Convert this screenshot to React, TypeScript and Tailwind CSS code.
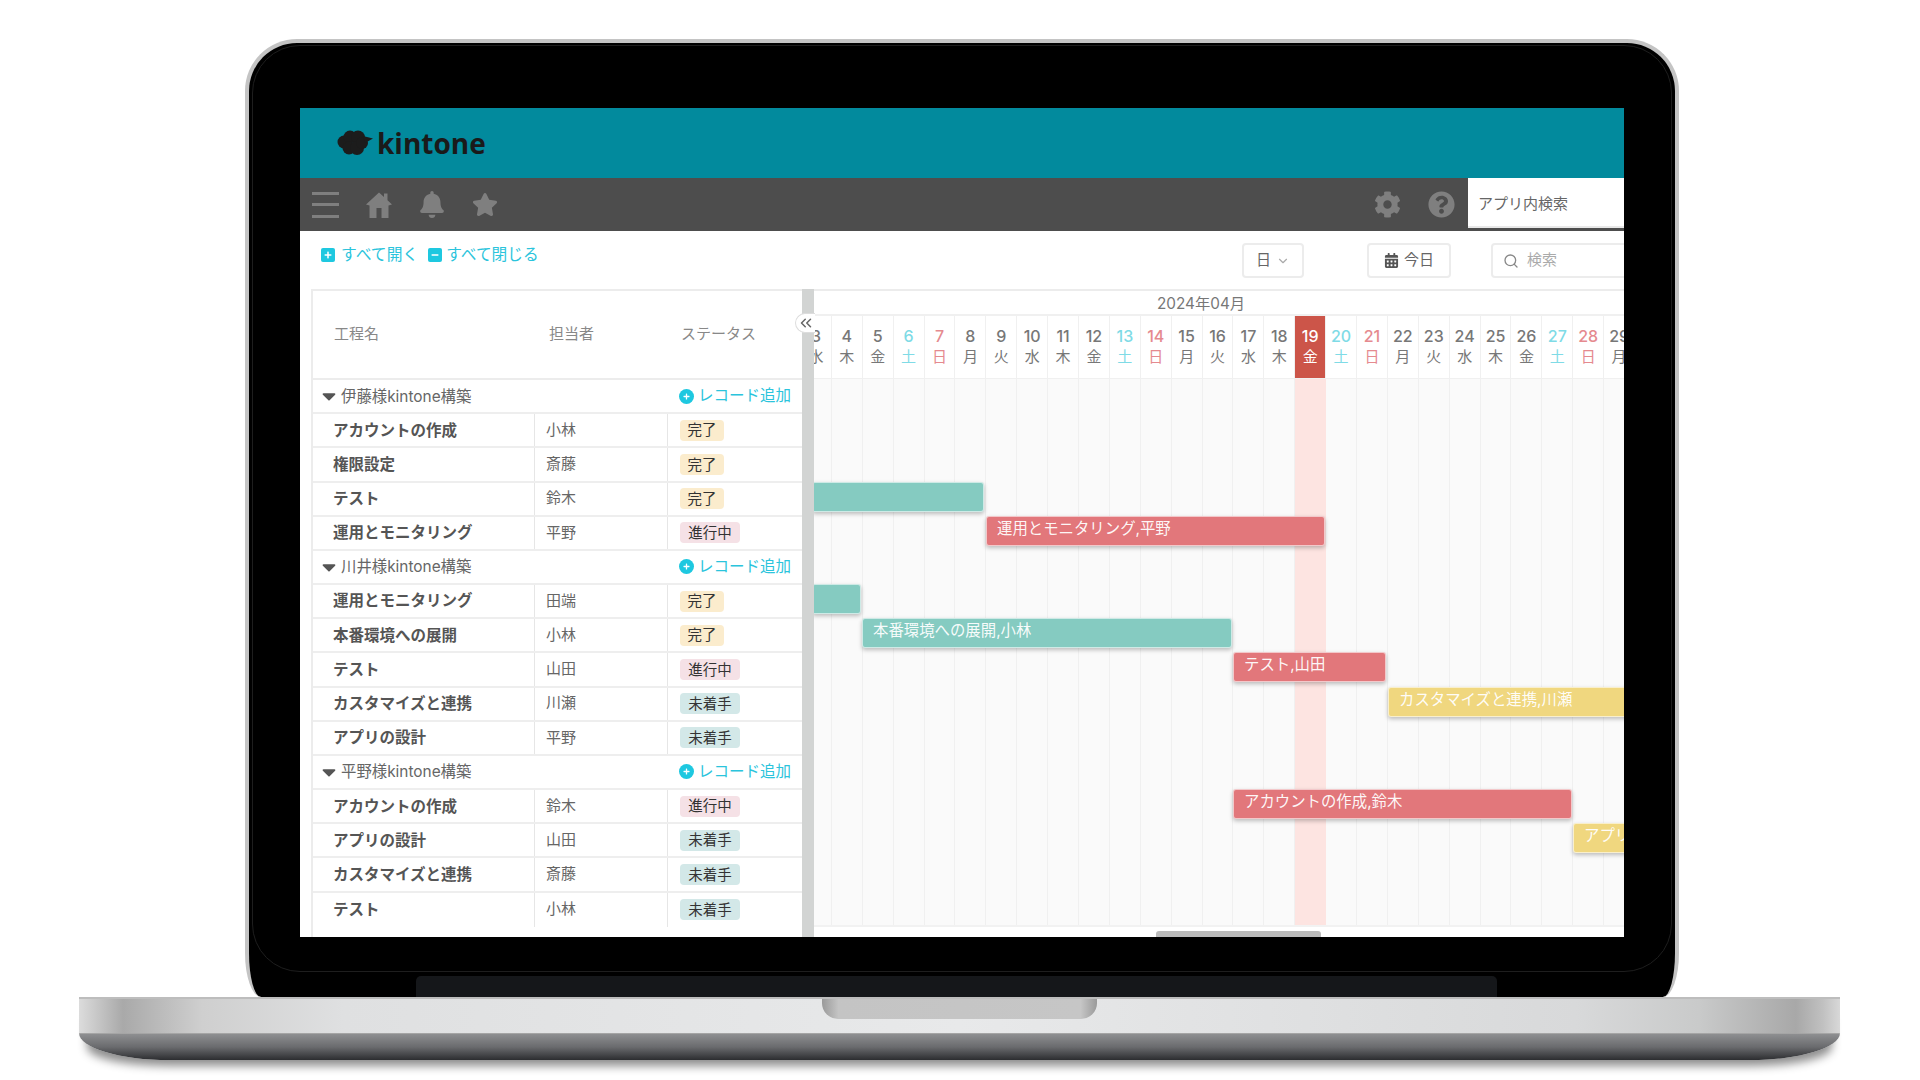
import { FaBell, FaStar, FaCog, FaQuestionCircle, FaCalendarAlt, FaPlus, FaMinus, FaCaretDown } from "react-icons/fa";
import { FiChevronDown, FiSearch, FiChevronsLeft } from "react-icons/fi";

const DAYS: [number, string][] = [
  [3, "水"], [4, "木"], [5, "金"], [6, "土"], [7, "日"], [8, "月"], [9, "火"], [10, "水"], [11, "木"],
  [12, "金"], [13, "土"], [14, "日"], [15, "月"], [16, "火"], [17, "水"], [18, "木"], [19, "金"], [20, "土"],
  [21, "日"], [22, "月"], [23, "火"], [24, "水"], [25, "木"], [26, "金"], [27, "土"], [28, "日"], [29, "月"],
];

type Status = "完了" | "進行中" | "未着手";
type Row = { group: string } | { name: string; who: string; status: Status };

const ROWS: Row[] = [
  { group: "伊藤様kintone構築" },
  { name: "アカウントの作成", who: "小林", status: "完了" },
  { name: "権限設定", who: "斎藤", status: "完了" },
  { name: "テスト", who: "鈴木", status: "完了" },
  { name: "運用とモニタリング", who: "平野", status: "進行中" },
  { group: "川井様kintone構築" },
  { name: "運用とモニタリング", who: "田端", status: "完了" },
  { name: "本番環境への展開", who: "小林", status: "完了" },
  { name: "テスト", who: "山田", status: "進行中" },
  { name: "カスタマイズと連携", who: "川瀬", status: "未着手" },
  { name: "アプリの設計", who: "平野", status: "未着手" },
  { group: "平野様kintone構築" },
  { name: "アカウントの作成", who: "鈴木", status: "進行中" },
  { name: "アプリの設計", who: "山田", status: "未着手" },
  { name: "カスタマイズと連携", who: "斎藤", status: "未着手" },
  { name: "テスト", who: "小林", status: "未着手" },
];

const STATUS_STYLE: Record<Status, string> = {
  完了: "bg-[#fbeccd] w-[44px]",
  進行中: "bg-[#f5e1e6] w-[60px]",
  未着手: "bg-[#d3e8e8] w-[60px]",
};

// one entry per table row; null rows have no bar
const BARS: ({ label: string; className: string } | null)[] = [
  null,
  null,
  null,
  { label: "", className: "-ml-[2px] w-[172px] bg-[#85cbc1]" },
  { label: "運用とモニタリング,平野", className: "ml-[172px] w-[339px] bg-[#e2777b]" },
  null,
  { label: "", className: "-ml-[2px] w-[49px] bg-[#85cbc1]" },
  { label: "本番環境への展開,小林", className: "ml-[48px] w-[370px] bg-[#85cbc1]" },
  { label: "テスト,山田", className: "ml-[419px] w-[153px] bg-[#e2777b]" },
  { label: "カスタマイズと連携,川瀬", className: "ml-[574px] w-[300px] bg-[#f0d77f]" },
  null,
  null,
  { label: "アカウントの作成,鈴木", className: "ml-[419px] w-[339px] bg-[#e2777b]" },
  { label: "アプリの設計,山田", className: "ml-[759px] w-[200px] bg-[#f0d77f]" },
  null,
  null,
];

const dayColor = (wd: string) =>
  wd === "土" ? "text-[#7fdbe6]" : wd === "日" ? "text-[#e58a8f]" : "text-[#777777]";

const KintoneCloud = () => (
  <svg width="37" height="26" viewBox="0 0 37 26" fill="#1c1c1c">
    <circle cx="7" cy="12" r="6.5" />
    <circle cx="13" cy="7" r="6.5" />
    <circle cx="21" cy="7.5" r="7" />
    <circle cx="12" cy="18" r="6.5" />
    <circle cx="20" cy="18" r="7" />
    <circle cx="25" cy="13" r="6" />
    <path d="M26 6 L36 8.5 L28 13 Z" />
  </svg>
);

const HomeIcon = () => (
  <svg width="26" height="26" viewBox="0 0 26 26" fill="#7f7f7f">
    <path d="M13 0.5 L18 5 L18 1.5 L21.5 1.5 L21.5 8.2 L26 12.5 L22.5 13.5 L22.5 26 L15.5 26 L15.5 16 L10.5 16 L10.5 26 L3.5 26 L3.5 13.5 L0 12.5 Z" />
  </svg>
);

const Header = () => (
  <>
    <div className="flex h-[70px] items-center gap-[3px] bg-[#028a9d] pb-[1px] pl-[37px]">
      <KintoneCloud />
      <span className="font-['Open_Sans',sans-serif] text-[28px] leading-none font-bold text-[#1a1a1a]">
        kintone
      </span>
    </div>
    <div className="flex h-[53px] items-center bg-[#4d4d4d] text-[#7f7f7f]">
      <div className="ml-[12px] flex h-[26px] w-[27px] flex-col justify-between">
        <div className="h-[3px] bg-[#7f7f7f]" />
        <div className="h-[3px] bg-[#7f7f7f]" />
        <div className="h-[3px] bg-[#7f7f7f]" />
      </div>
      <div className="ml-[27px] flex w-[26px] justify-center">
        <HomeIcon />
      </div>
      <div className="ml-[27px] flex w-[26px] justify-center">
        <FaBell className="text-[27px]" />
      </div>
      <div className="ml-[27px] flex w-[26px] justify-center">
        <FaStar className="text-[27px]" />
      </div>
      <FaCog className="ml-auto text-[27px]" />
      <FaQuestionCircle className="ml-[27px] text-[27px]" />
      <div className="ml-[13px] flex h-[50px] w-[156px] items-center self-start border-b-2 border-[#e8e8e8] bg-white pt-[4px] pl-[10px] text-[15px] text-[#666666]">
        アプリ内検索
      </div>
    </div>
  </>
);

const Toolbar = () => (
  <div className="flex h-[58px] text-[15px]">
    <div className="flex h-[46px] items-center pt-[2px] pl-[21px] text-[#2bc4dc]">
      <span className="flex h-[14px] w-[14px] items-center justify-center rounded-[2px] bg-[#1ec8e0] text-[8px] text-white">
        <FaPlus />
      </span>
      <span className="ml-[6px] text-[15.8px]">すべて開く</span>
      <span className="ml-[10px] flex h-[14px] w-[14px] items-center justify-center rounded-[2px] bg-[#1ec8e0] text-[8px] text-white">
        <FaMinus />
      </span>
      <span className="ml-[4px] text-[15.7px]">すべて閉じる</span>
    </div>
    <div className="ml-auto flex gap-[63px] pt-[12px] text-[#666666]">
      <div className="flex h-[35px] w-[62px] items-center rounded-[4px] border-2 border-[#ececec] pl-[12px]">
        日
        <FiChevronDown className="ml-[5px] text-[14px] text-[#aaaaaa]" />
      </div>
      <div className="flex h-[35px] w-[84px] items-center justify-center gap-[5px] rounded-[4px] border-2 border-[#ececec]">
        <FaCalendarAlt className="text-[15px] text-[#555555]" />
        今日
      </div>
      <div className="-mr-[9px] -ml-[23px] flex h-[35px] w-[142px] items-center rounded-[4px] border-2 border-[#ececec] pl-[10px] text-[#aaaaaa]">
        <FiSearch className="text-[16px] text-[#888888]" />
        <span className="ml-[8px]">検索</span>
      </div>
    </div>
  </div>
);

const TaskTable = () => (
  <div className="ml-[11px] flex w-[491px] flex-col border-t-2 border-l-2 border-[#ececec]">
    <div className="flex h-[89px] shrink-0 items-center border-b-2 border-[#ececec] text-[15px] text-[#888888]">
      <span className="ml-[21px] w-[215px]">工程名</span>
      <span className="w-[132px]">担当者</span>
      <span>ステータス</span>
    </div>
    {ROWS.map((row, i) =>
      "group" in row ? (
        <div key={i} className="flex h-[34.18px] shrink-0 items-center border-b-2 border-[#eeeeee]">
          <FaCaretDown className="ml-[4.5px] text-[22px] text-[#555555]" />
          <span className="ml-[1.5px] text-[15.4px] text-[#666666]">{row.group}</span>
          <span className="ml-auto flex h-[15px] w-[15px] items-center justify-center rounded-full bg-[#1ec8e0] text-[7px] text-white">
            <FaPlus />
          </span>
          <span className="mr-[11px] ml-[4px] text-[15.5px] text-[#2bc4dc]">レコード追加</span>
        </div>
      ) : (
        <div key={i} className="flex h-[34.18px] shrink-0 items-center border-b-2 border-[#eeeeee] text-[15px] last:border-b-0">
          <div className="flex h-full w-[222px] items-center border-r border-[#e6e6e6] pl-[20px] text-[15.5px] font-bold text-[#555555]">
            {row.name}
          </div>
          <div className="flex h-full w-[133px] items-center border-r border-[#e6e6e6] pl-[11px] text-[#666666]">
            {row.who}
          </div>
          <div className="pl-[12px]">
            <div className={`flex h-[21px] items-center justify-center rounded-[4px] text-[14.5px] text-[#333333] ${STATUS_STYLE[row.status]}`}>
              {row.status}
            </div>
          </div>
        </div>
      )
    )}
  </div>
);

const Gantt = () => (
  <div className="flex w-[810px] flex-col overflow-hidden border-t-2 border-[#ececec]">
    <div className="h-[25px] shrink-0 border-b-2 border-[#f0f0f0] pl-[343px] text-[15.3px] leading-[26px] text-[#777777]">
      2024年04月
    </div>
    <div className="-ml-[13px] flex h-[63px] shrink-0">
      {DAYS.map(([d, wd]) => (
        <div
          key={d}
          className={`flex w-[30.9px] shrink-0 flex-col items-center border-r border-b border-[#f0f0f0] pt-[9px] ${
            d === 19 ? "border-[#cc5549] bg-[#cc5549] text-white" : dayColor(wd)
          }`}
        >
          <span className="text-[16px] leading-[22px] font-medium">{d}</span>
          <span className="text-[15px] leading-[20px]">{wd}</span>
        </div>
      ))}
    </div>
    <div className="relative h-[546px] shrink-0 bg-[#fafafa]">
      <div className="absolute inset-0 -ml-[13px] flex">
        {DAYS.map(([d]) => (
          <div
            key={d}
            className={`w-[30.9px] shrink-0 border-r border-[#f0f0f0] ${d === 19 ? "border-[#fde4e1] bg-[#fde4e1]" : ""}`}
          />
        ))}
      </div>
      <div className="relative flex flex-col">
        {BARS.map((bar, i) => (
          <div key={i} className="h-[34.18px] shrink-0">
            {bar && (
              <div
                className={`h-[30px] rounded-[3px] border border-white/60 pl-[10px] text-[15.4px] leading-[24px] whitespace-nowrap text-white/95 shadow-[0_2px_4px_rgba(0,0,0,0.25)] ${bar.className}`}
              >
                {bar.label}
              </div>
            )}
          </div>
        ))}
      </div>
    </div>
    <div className="flex h-[12px] shrink-0 items-end border-t-2 border-[#f2f2f2] bg-white pl-[342px]">
      <div className="h-[6px] w-[165px] rounded-t-[3px] bg-[#bbbbbb]" />
    </div>
  </div>
);

const Screen = () => (
  <div className="flex h-[829px] w-[1324px] shrink-0 flex-col overflow-hidden bg-white font-['Inter','Noto_Sans_CJK_JP',sans-serif]">
    <Header />
    <Toolbar />
    <div className="relative flex min-h-0 flex-1">
      <TaskTable />
      <div className="w-[12px] shrink-0 bg-[#d2d4d3]" />
      <Gantt />
      <div className="absolute top-[24px] left-[495px] flex h-[20px] w-[20px] items-center justify-center rounded-l-full border border-r-0 border-[#dddddd] bg-white text-[18px] text-[#666666]">
        <FiChevronsLeft />
      </div>
    </div>
  </div>
);

export default function App() {
  return (
    <div className="flex h-[1080px] w-[1920px] flex-col overflow-hidden bg-white pt-[39px]">
      <div className="relative ml-[245px] flex h-[958px] w-[1434px] shrink-0 flex-col rounded-t-[52px] rounded-b-[16px_44px] border-x-4 border-t-4 border-[#c4c4c4] bg-black pt-[65px] pl-[51px]">
        <Screen />
        <div className="absolute top-[2px] right-[3px] bottom-[25px] left-[3px] rounded-[48px] border border-[#1e1e1e]" />
        <div className="relative mt-auto ml-[116px] h-[21px] w-[1081px] rounded-t-[5px] bg-[#15171a]" />
      </div>
      <div className="ml-[79px] w-[1761px] shrink-0 rounded-b-[90px_27px] shadow-[0_14px_10px_-8px_rgba(0,0,0,0.45)]">
        <div className="flex h-[36px] justify-center border-t-2 border-[#bdbdbd] bg-[linear-gradient(to_right,#dcdcdc_0%,#a9a9a9_2.5%,#cfcfcf_7%,#dfe0e1_15%,#e8e9ea_50%,#d8d9da_85%,#c9caca_92%,#a8a8a8_97.5%,#c0c0c0_99%,#d8d8d8_100%)]">
          <div className="h-[20px] w-[275px] rounded-b-[16px] bg-[linear-gradient(to_right,#9a9a9a_0%,#c4c4c4_6%,#c6c6c6_94%,#9a9a9a_100%)]" />
        </div>
        <div className="h-[27px] rounded-b-[90px_27px] border-t border-[#a5a5a5] bg-[linear-gradient(to_bottom,#8e8f91_0%,#6a6b6e_50%,#2c2d30_100%)]" />
      </div>
    </div>
  );
}
